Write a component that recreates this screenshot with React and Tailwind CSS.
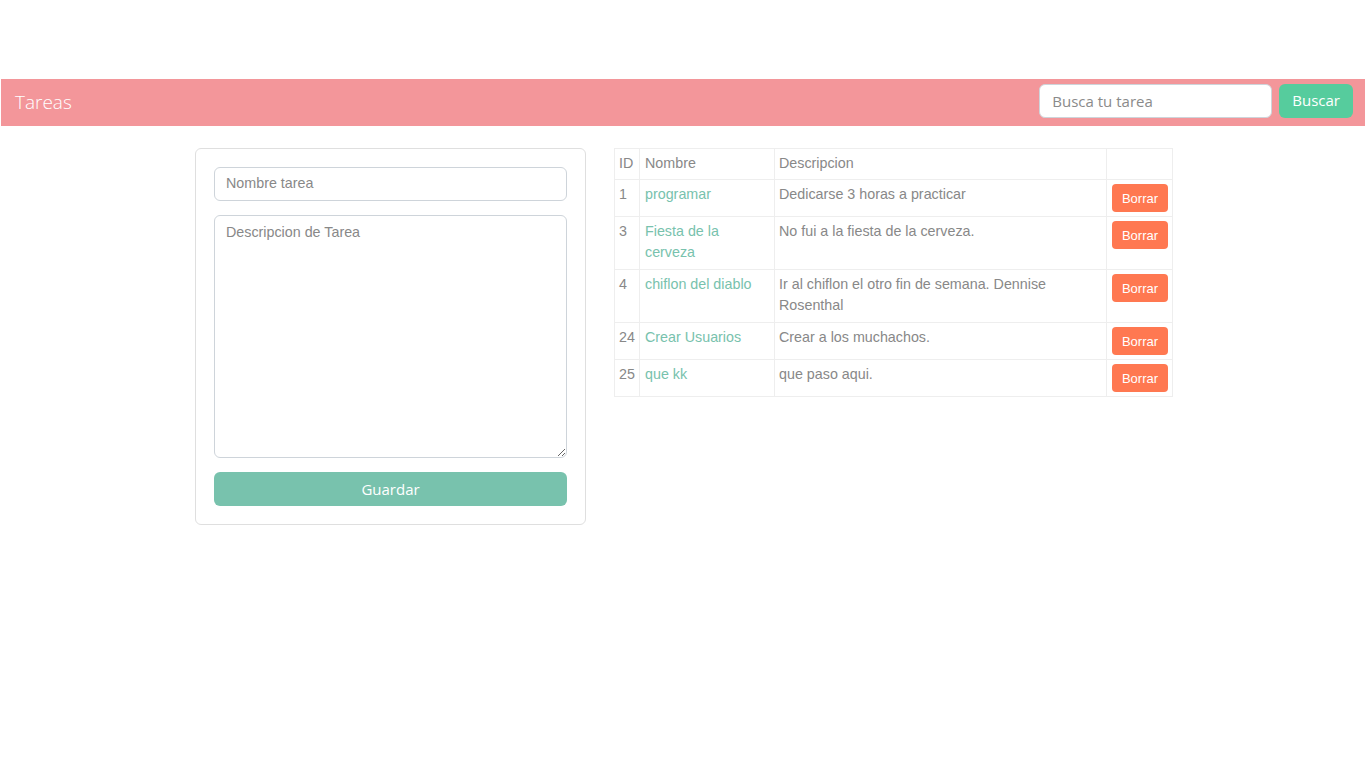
import React, { useState } from 'react';

const tareas = [
  { id: 1, nombre: 'programar', descripcion: 'Dedicarse 3 horas a practicar' },
  { id: 3, nombre: 'Fiesta de la cerveza', descripcion: 'No fui a la fiesta de la cerveza.' },
  { id: 4, nombre: 'chiflon del diablo', descripcion: 'Ir al chiflon el otro fin de semana. Dennise Rosenthal' },
  { id: 24, nombre: 'Crear Usuarios', descripcion: 'Crear a los muchachos.' },
  { id: 25, nombre: 'que kk', descripcion: 'que paso aqui.' },
];

const heading = { fontFamily: '"Open Sans", "Noto Sans", sans-serif' };

const App = () => {
  const [busqueda, setBusqueda] = useState('');
  const [nombre, setNombre] = useState('');
  const [descripcion, setDescripcion] = useState('');

  return (
    <div
      className="min-h-screen bg-white pt-[79px] text-[14.3px] text-[#888888]"
      style={{ fontFamily: '"Liberation Sans", Arial, sans-serif' }}
    >
      {/* Navbar */}
      <nav className="mx-[1px] flex h-[47px] items-center justify-between bg-[#f3969a] pl-[14px] pr-[12px]">
        <span className="text-[19px] font-light text-white" style={heading}>
          Tareas
        </span>
        <form className="mb-[4px] flex items-center gap-[7px]" onSubmit={(e) => e.preventDefault()}>
          <input
            value={busqueda}
            onChange={(e) => setBusqueda(e.target.value)}
            placeholder="Busca tu tarea"
            className="h-[34px] w-[233px] rounded-[6px] border border-[#ced4da] bg-white px-[12px] text-[15px] text-[#888888] outline-none placeholder:text-[#8a8a8a]"
            style={heading}
          />
          <button
            className="h-[34px] rounded-[6px] bg-[#56cc9d] px-[13px] text-[15px] text-white"
            style={heading}
          >
            Buscar
          </button>
        </form>
      </nav>

      {/* Content */}
      <div className="mx-auto mt-[22px] flex w-[978px] items-start gap-[28px] pl-[1px]">
        {/* Form card */}
        <div className="w-[391px] shrink-0 rounded-[6px] border border-[#dfdfdf] p-[18px]">
          <input
            value={nombre}
            onChange={(e) => setNombre(e.target.value)}
            placeholder="Nombre tarea"
            className="block h-[34px] w-full rounded-[6px] border border-[#ced4da] px-[11px] pb-[2px] text-[14.3px] outline-none placeholder:text-[#888888]"
          />
          <textarea
            value={descripcion}
            onChange={(e) => setDescripcion(e.target.value)}
            placeholder="Descripcion de Tarea"
            className="mt-[14px] block h-[243px] w-full rounded-[6px] border border-[#ced4da] px-[11px] py-[6px] text-[14.3px] leading-[21px] outline-none placeholder:text-[#888888]"
          />
          <button
            className="mt-[14px] block h-[34px] w-full rounded-[6px] bg-[#78c2ad] text-[15px] text-white"
            style={heading}
          >
            Guardar
          </button>
        </div>

        {/* Table */}
        <table className="w-[558px] table-fixed border-collapse leading-[21px]">
          <colgroup>
            <col className="w-[25px]" />
            <col className="w-[135px]" />
            <col className="w-[332px]" />
            <col className="w-[66px]" />
          </colgroup>
          <thead>
            <tr>
              <th className="border border-[#eeeeee] px-[4px] pt-[4px] pb-[5px] text-left font-normal">ID</th>
              <th className="border border-[#eeeeee] px-[5px] pt-[4px] pb-[5px] text-left font-normal">Nombre</th>
              <th className="border border-[#eeeeee] px-[4px] pt-[4px] pb-[5px] text-left font-normal">Descripcion</th>
              <th className="border border-[#eeeeee] px-[5px] pt-[4px] pb-[5px]"></th>
            </tr>
          </thead>
          <tbody>
            {tareas.map((t) => (
              <tr key={t.id}>
                <td className="border border-[#eeeeee] px-[4px] pt-[4px] pb-[6px] align-top">{t.id}</td>
                <td className="border border-[#eeeeee] px-[5px] pt-[4px] pb-[6px] align-top text-[#78c2ad]">
                  <a href="#">{t.nombre}</a>
                </td>
                <td className="border border-[#eeeeee] px-[4px] pt-[4px] pb-[6px] align-top">{t.descripcion}</td>
                <td className="border border-[#eeeeee] px-[5px] pt-[4px] pb-[6px] align-top">
                  <button className="-mb-[2px] block h-[28px] w-[56px] rounded-[4px] bg-[#ff7851] text-[13px] text-white">
                    Borrar
                  </button>
                </td>
              </tr>
            ))}
          </tbody>
        </table>
      </div>
    </div>
  );
};

export default App;
